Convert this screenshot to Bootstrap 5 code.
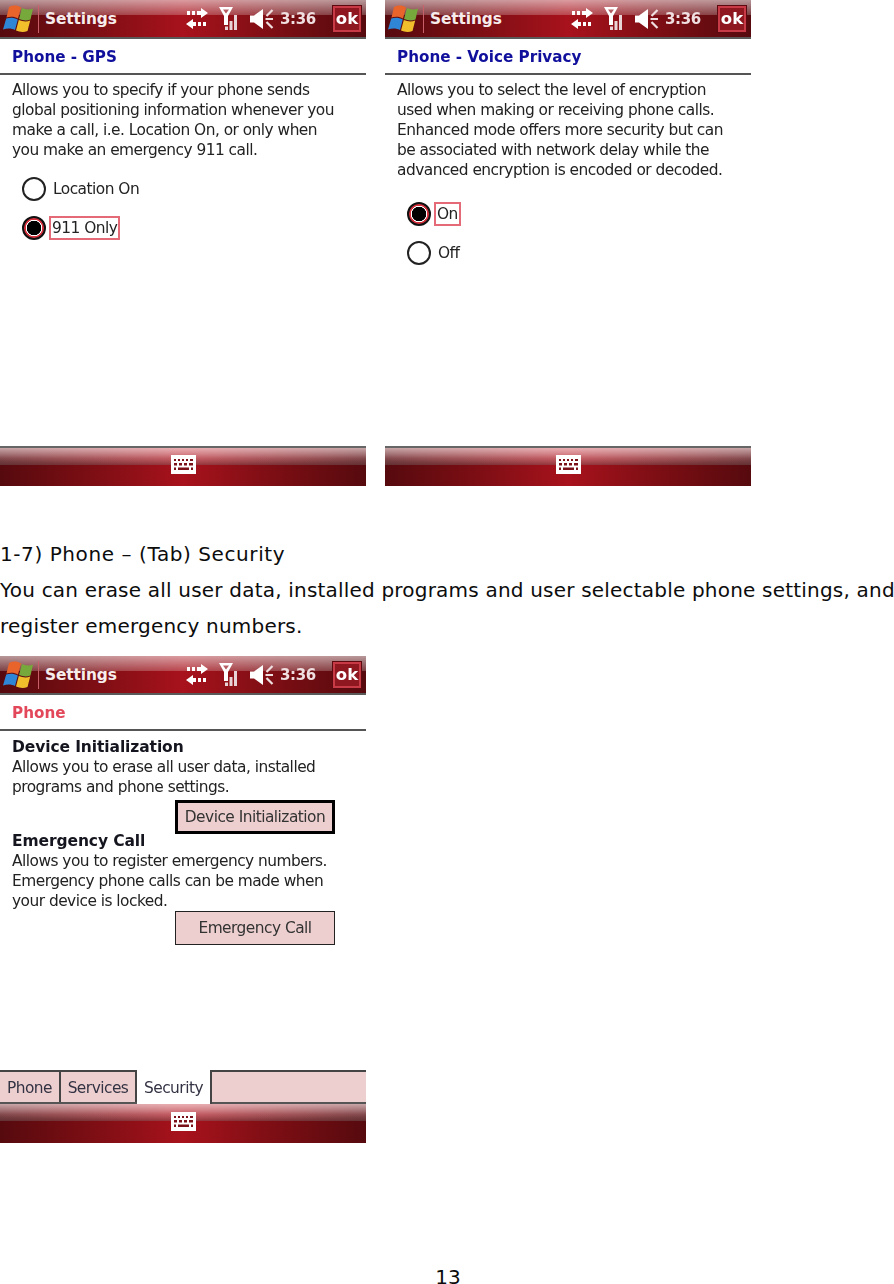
<!DOCTYPE html>
<html lang="en">
<head>
<meta charset="utf-8">
<title>Phone settings</title>
<link href="https://cdn.jsdelivr.net/npm/bootstrap@5.3.0/dist/css/bootstrap.min.css" rel="stylesheet">
<style>
html,body{margin:0;background:#fff;overflow:hidden}
body{font-family:"DejaVu Sans",sans-serif;color:#0c0c0c;width:894px;height:1284px}
.doc-text{font-size:20px;letter-spacing:.2px;line-height:36px;white-space:nowrap;margin:50px 0 12px}
.doc-head{letter-spacing:.58px}
.page-num{font-size:20px;line-height:14px;text-align:center;margin-top:127px;padding-left:2px}
.ppc{width:366px;height:486px;display:flex;flex-direction:column;font-family:"DejaVu Sans",sans-serif;font-size:15.4px;letter-spacing:-.52px;line-height:20px;color:#222;flex:none;filter:blur(.35px)}
.ppc-top{height:39px;flex:none;display:flex;align-items:center;color:#fff;border-bottom:2px solid #5a5a5a;
 background:linear-gradient(180deg,rgba(255,255,255,.58),rgba(255,255,255,.22)) 0 0/100% 15px no-repeat,linear-gradient(90deg,#560a0e 0,#7c0e14 25%,#a8121c 50%,#7c0e14 75%,#560a0e 100%)}
.ppc-flag{margin-left:3px}
.ppc-sep{width:1px;height:28px;background:#c8606a;margin:0 6px 0 5px}
.ppc-app{font-weight:700;font-size:15.4px;letter-spacing:-.1px;color:#f6ecec}
.ppc-gap{margin-left:11px}
.ppc-clock{font-weight:700;font-size:15px;letter-spacing:-.3px;color:#f0dfe0;margin-left:6px}
.ppc-ok{width:28px;height:26px;margin:0 5px 0 17px;background:#8e1720;border:2px solid #c83a46;outline:1px solid #5c0a10;color:#fff;font-weight:700;font-size:16.5px;letter-spacing:0;text-align:center;line-height:21px}
.ppc-title{height:36px;flex:none;padding:0 12px;font-weight:700;font-size:15.2px;letter-spacing:0;line-height:36px;color:#10109c;border-bottom:2px solid #555}
.ppc-title.is-red{color:#e2475a}
.ppc-main{flex:1 1 auto;padding:5px 12px 0;min-height:0}
.ppc-main.is-form{padding-top:6px}
.ppc-pick{padding:10px 0 0 10px}
.ppc-pick.is-deep{padding-top:15px}
.ppc-opt{height:38.5px;display:flex;align-items:center;gap:7px}
.ppc-opt .form-check-input{width:24px;height:24px;margin:0;flex:none;border:2px solid #222;background:#fff;box-shadow:none}
.ppc-opt .form-check-input:checked{background:radial-gradient(circle,#000 0 7px,#fff 7.5px 8px,#d8323f 8.5px 10px,#222 10.5px);border-color:#111}
.ppc-mark{border:2px solid #e46a78;padding:0 1px;margin-left:-4px;line-height:20px}
.ppc-h{font-weight:700;font-size:15.5px;letter-spacing:-.1px;color:#15151f}
.ppc-actions{display:flex;justify-content:flex-end;padding:3px 19px 0 0;margin-bottom:-3px}
.ppc-actions.is-low{padding-top:0;margin-bottom:0}
.ppc-btn{width:160px;height:34px;padding:0;border-radius:0;background:#eecfcf;border:1.5px solid #222;color:#333;font-size:15.4px;letter-spacing:-.52px;line-height:28px}
.ppc-btn.is-focus{border:3px solid #000}
.ppc-btn:hover{background:#eecfcf;color:#333}
.ppc-tabs{height:34px;flex:none;flex-wrap:nowrap;background:#eecfcf;border-top:2px solid #444;border-bottom:2px solid #555}
.ppc-tabs .nav-link{padding:0;height:30px;line-height:33px;color:#334;text-align:center;border-right:2px solid #444}
.ppc-tabs .t1{width:61px}.ppc-tabs .t2{width:76px}.ppc-tabs .t3{width:75px}
.ppc-tabs .nav-link.active{background:#fff;margin:-2px 0 -2px;height:34px;line-height:37px}
.ppc-kb{height:40px;flex:none;display:flex;justify-content:center;padding-top:7px;border-top:2px solid #666;
 background:radial-gradient(ellipse 75% 100% at 50% 0,rgba(255,190,195,.35),rgba(255,190,195,0)) 0 0/100% 17px no-repeat,linear-gradient(180deg,rgba(255,255,255,.62),rgba(255,255,255,.25) 60%,rgba(120,120,120,.35)) 0 0/100% 17px no-repeat,linear-gradient(90deg,#560a0e 0,#7c0e14 25%,#a8121c 50%,#7c0e14 75%,#560a0e 100%)}
.ppc-tabs+.ppc-kb{border-top:0;height:39px;padding-top:8px}
.ppc-gfx{flex:none;display:block}
</style>
</head>
<body>
<svg width="0" height="0" class="position-absolute" aria-hidden="true">
 <symbol id="flag" viewBox="0 0 30 27">
  <path d="M6 2C10 0 14 0 18 2.500L15 13.500C11.500 11.500 7.500 11.500 3.500 12.500Z" fill="#e8642a"/>
  <path d="M19 3C22 4.500 26 5 30 3.500L27.500 14.500C23.500 16 20 15.500 16 14Z" fill="#76a83c"/>
  <path d="M3.200 13.500C7 12.500 11 12.500 14.800 14.500L12 25C8.500 23 4 23 0 24.500Z" fill="#2f86d6"/>
  <path d="M15.800 15C19.500 16.500 23.500 17 27.200 15.500L24.500 26C20.500 27.500 16.500 27 13 25.500Z" fill="#f2bf2c"/>
 </symbol>
 <symbol id="sync" viewBox="0 0 22 21">
  <path d="M1 3h3v4H1zM6 3h3v4H6zM11 3h4V0l7 5-7 5V7h-4z" fill="#fff"/>
  <path d="M12 14h3v4h-3zM17 14h3v4h-3zM10 14H7v-3l-7 5 7 5v-3h3z" fill="#fff"/>
 </symbol>
 <symbol id="signal" viewBox="0 0 20 25">
  <path d="M0 1h14L9 10v9H5v-9z M4 3.500l3 4 3-4z" fill="#fff" fill-rule="evenodd"/>
  <path d="M6 20.500h3V24H6zM10.500 15h3v9h-3zM15 9h3v15h-3z" fill="#e8d4d6"/>
 </symbol>
 <symbol id="speaker" viewBox="0 0 24 20">
  <path d="M0 6.500h4L13 0v20L4 13.500H0z" fill="#fff"/>
  <path d="M22.500 1l-6 6M15.500 10h7.500M22.500 19l-6-6" stroke="#f0dfe0" stroke-width="2.200" fill="none"/>
 </symbol>
 <symbol id="kbd" viewBox="0 0 25 19">
  <path d="M0 0h25v19H0z" fill="#fff"/>
  <path d="M3 4h2v2H3zM7 4h2v2H7zM11 4h2v2h-2zM15 4h2v2h-2zM19 4h3v2h-3zM3 8h3v2.500H3zM8 8h3v2.500H8zM13 8h3v2.500h-3zM18 8h4v2.500h-4zM3 12.500h2V15H3zM20 12.500h2V15h-2zM7 12.500h11V15H7z" fill="#7a1018"/>
 </symbol>
</svg>

<div class="d-flex" style="gap:19px">
 <section class="ppc">
  <div class="ppc-top">
   <svg class="ppc-gfx ppc-flag" width="30" height="27"><use href="#flag"/></svg>
   <span class="ppc-sep"></span><span class="ppc-app">Settings</span>
   <svg class="ppc-gfx ms-auto" width="22" height="21"><use href="#sync"/></svg>
   <svg class="ppc-gfx ppc-gap" width="20" height="25"><use href="#signal"/></svg>
   <svg class="ppc-gfx ppc-gap" width="24" height="20"><use href="#speaker"/></svg>
   <span class="ppc-clock">3:36</span><span class="ppc-ok">ok</span>
  </div>
  <div class="ppc-title">Phone - GPS</div>
  <div class="ppc-main">
   <div>Allows you to specify if your phone sends<br>global positioning information whenever you<br>make a call, i.e. Location On, or only when<br>you make an emergency 911 call.</div>
   <div class="ppc-pick">
    <label class="ppc-opt"><input class="form-check-input" type="radio" name="gps"><span>Location On</span></label>
    <label class="ppc-opt"><input class="form-check-input" type="radio" name="gps" checked><span class="ppc-mark">911 Only</span></label>
   </div>
  </div>
  <div class="ppc-kb"><svg class="ppc-gfx" width="25" height="19"><use href="#kbd"/></svg></div>
 </section>
 <section class="ppc">
  <div class="ppc-top">
   <svg class="ppc-gfx ppc-flag" width="30" height="27"><use href="#flag"/></svg>
   <span class="ppc-sep"></span><span class="ppc-app">Settings</span>
   <svg class="ppc-gfx ms-auto" width="22" height="21"><use href="#sync"/></svg>
   <svg class="ppc-gfx ppc-gap" width="20" height="25"><use href="#signal"/></svg>
   <svg class="ppc-gfx ppc-gap" width="24" height="20"><use href="#speaker"/></svg>
   <span class="ppc-clock">3:36</span><span class="ppc-ok">ok</span>
  </div>
  <div class="ppc-title">Phone - Voice Privacy</div>
  <div class="ppc-main">
   <div>Allows you to select the level of encryption<br>used when making or receiving phone calls.<br>Enhanced mode offers more security but can<br>be associated with network delay while the<br>advanced encryption is encoded or decoded.</div>
   <div class="ppc-pick is-deep">
    <label class="ppc-opt"><input class="form-check-input" type="radio" name="vp" checked><span class="ppc-mark">On</span></label>
    <label class="ppc-opt"><input class="form-check-input" type="radio" name="vp"><span>Off</span></label>
   </div>
  </div>
  <div class="ppc-kb"><svg class="ppc-gfx" width="25" height="19"><use href="#kbd"/></svg></div>
 </section>
</div>

<p class="doc-text"><span class="doc-head">1-7) Phone – (Tab) Security</span><br>You can erase all user data, installed programs and user selectable phone settings, and<br>register emergency numbers.</p>

<section class="ppc" style="height:487px">
 <div class="ppc-top">
  <svg class="ppc-gfx ppc-flag" width="30" height="27"><use href="#flag"/></svg>
  <span class="ppc-sep"></span><span class="ppc-app">Settings</span>
  <svg class="ppc-gfx ms-auto" width="22" height="21"><use href="#sync"/></svg>
  <svg class="ppc-gfx ppc-gap" width="20" height="25"><use href="#signal"/></svg>
  <svg class="ppc-gfx ppc-gap" width="24" height="20"><use href="#speaker"/></svg>
  <span class="ppc-clock">3:36</span><span class="ppc-ok">ok</span>
 </div>
 <div class="ppc-title is-red">Phone</div>
 <div class="ppc-main is-form">
  <div class="ppc-h">Device Initialization</div>
  <div>Allows you to erase all user data, installed<br>programs and phone settings.</div>
  <div class="ppc-actions"><button type="button" class="btn ppc-btn is-focus">Device Initialization</button></div>
  <div class="ppc-h">Emergency Call</div>
  <div>Allows you to register emergency numbers.<br>Emergency phone calls can be made when<br>your device is locked.</div>
  <div class="ppc-actions is-low"><button type="button" class="btn ppc-btn">Emergency Call</button></div>
 </div>
 <ul class="nav ppc-tabs">
  <li class="nav-item"><a class="nav-link t1" href="#">Phone</a></li>
  <li class="nav-item"><a class="nav-link t2" href="#">Services</a></li>
  <li class="nav-item"><a class="nav-link t3 active" href="#">Security</a></li>
 </ul>
 <div class="ppc-kb"><svg class="ppc-gfx" width="25" height="19"><use href="#kbd"/></svg></div>
</section>

<div class="page-num">13</div>
<script src="https://cdn.jsdelivr.net/npm/bootstrap@5.3.0/dist/js/bootstrap.bundle.min.js"></script>
</body>
</html>
